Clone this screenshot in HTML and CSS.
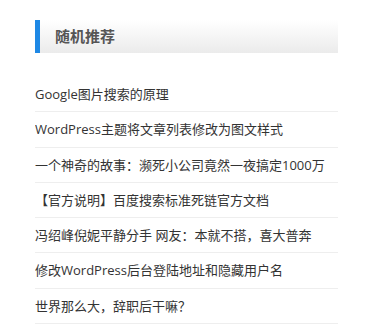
FILE: index.html
```html
<!DOCTYPE html>
<html lang="zh-CN">
<head>
  <meta charset="UTF-8" />
  <title>随机推荐</title>
  <link rel="stylesheet" href="styles.css">
</head>
<body>
  <div class="widget">
    <h3 class="widget-title">随机推荐</h3>
    <ul class="post-list">
      <li><a href="#">Google图片搜索的原理</a></li>
      <li><a href="#">WordPress主题将文章列表修改为图文样式</a></li>
      <li><a href="#">一个神奇的故事：濒死小公司竟然一夜搞定1000万</a></li>
      <li><a href="#">【官方说明】百度搜索标准死链官方文档</a></li>
      <li><a href="#">冯绍峰倪妮平静分手 网友：本就不搭，喜大普奔</a></li>
      <li><a href="#">修改WordPress后台登陆地址和隐藏用户名</a></li>
      <li><a href="#">世界那么大，辞职后干嘛？</a></li>
    </ul>
  </div>
</body>
</html>
```

FILE: styles.css
```css
body { margin: 0; background: #fff; font-family: "Open Sans", "Noto Sans CJK SC", sans-serif; color: #333; }
.widget { width: 303px; margin: 20px 0 0 35px; }
.widget-title { margin: 0; height: 33px; line-height: 33px; padding-left: 15px; border-left: 5px solid #1e88e5; font-size: 15px; font-weight: bold; color: #555; background: linear-gradient(to bottom, #fff, #ebebeb); }
.post-list { list-style: none; margin: 24px 0 0 0; padding: 0; }
.post-list li { height: 34.3px; line-height: 34.3px; border-bottom: 1px solid #eee; font-size: 13px; white-space: nowrap; overflow: hidden; }
.post-list a { color: #333; text-decoration: none; font-family: "Open Sans", "Noto Sans CJK TC", sans-serif; }
```
